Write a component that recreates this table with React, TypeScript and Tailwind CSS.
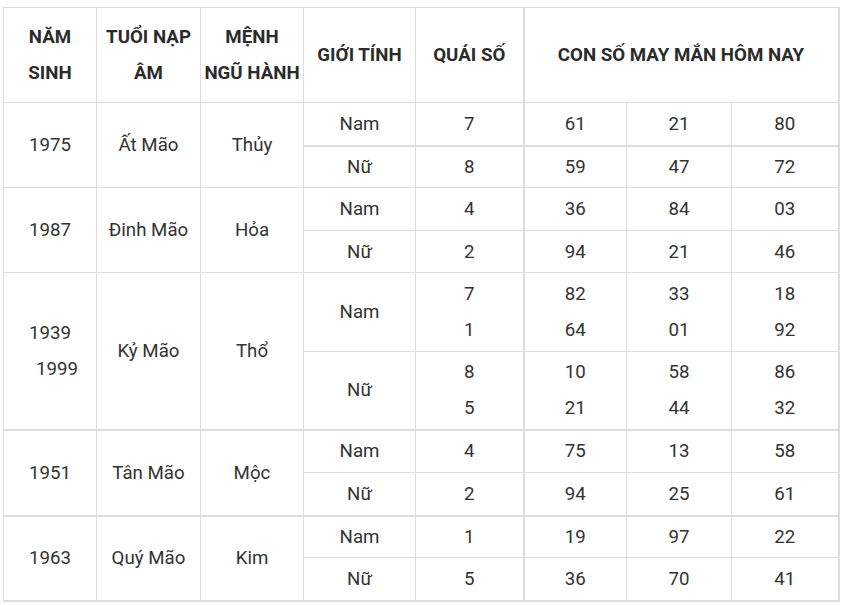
import React from "react";

type Sub = { g: string; q: string; n: [string, string, string]; h: string; thick?: boolean };
type Group = { year: React.ReactNode; tuoi: string; menh: string; rows: Sub[]; thick?: boolean };

const groups: Group[] = [
  {
    year: "1975",
    tuoi: "Ất Mão",
    menh: "Thủy",
    rows: [
      { g: "Nam", q: "7", n: ["61", "21", "80"], h: "h-[43px]", thick: true },
      { g: "Nữ", q: "8", n: ["59", "47", "72"], h: "h-[42px]" },
    ],
  },
  {
    year: "1987",
    tuoi: "Đinh Mão",
    menh: "Hỏa",
    rows: [
      { g: "Nam", q: "4", n: ["36", "84", "03"], h: "h-[43px]" },
      { g: "Nữ", q: "2", n: ["94", "21", "46"], h: "h-[42px]" },
    ],
  },
  {
    year: (
      <>
        1939
        <br />
        <span className="pl-[14px]">1999</span>
      </>
    ),
    tuoi: "Kỷ Mão",
    menh: "Thổ",
    rows: [
      { g: "Nam", q: "7\n1", n: ["82\n64", "33\n01", "18\n92"], h: "h-[79px]" },
      { g: "Nữ", q: "8\n5", n: ["10\n21", "58\n44", "86\n32"], h: "h-[78px]" },
    ],
  },
  {
    year: "1951",
    tuoi: "Tân Mão",
    menh: "Mộc",
    thick: true,
    rows: [
      { g: "Nam", q: "4", n: ["75", "13", "58"], h: "h-[43px]" },
      { g: "Nữ", q: "2", n: ["94", "25", "61"], h: "h-[43px]" },
    ],
  },
  {
    year: "1963",
    tuoi: "Quý Mão",
    menh: "Kim",
    thick: true,
    rows: [
      { g: "Nam", q: "1", n: ["19", "97", "22"], h: "h-[42px]" },
      { g: "Nữ", q: "5", n: ["36", "70", "41"], h: "h-[43px]" },
    ],
  },
];

const cell = "border border-[#dddddd] text-center align-middle p-0 leading-[36px] whitespace-pre-line";

export default function App() {
  return (
    <div className="bg-white w-[844px] h-[605px] pt-[7px] pl-[3px] font-['Roboto',sans-serif] text-[18.7px] text-[#333333]">
      <table className="table-fixed border-collapse w-[835px]">
        <colgroup>
          <col className="w-[93px]" />
          <col className="w-[104px]" />
          <col className="w-[103px]" />
          <col className="w-[112px]" />
          <col className="w-[108px]" />
          <col className="w-[103px]" />
          <col className="w-[105px]" />
          <col className="w-[107px]" />
        </colgroup>
        <thead>
          <tr className="h-[95px] font-bold text-[#2b2b2b]">
            <th className={cell}>NĂM<br />SINH</th>
            <th className={cell}>TUỔI NẠP<br />ÂM</th>
            <th className={cell}>MỆNH<br />NGŨ HÀNH</th>
            <th className={cell}>GIỚI TÍNH</th>
            <th className={cell}>QUÁI SỐ</th>
            <th colSpan={3} className={`${cell} border-l-2 border-r-2`}>CON SỐ MAY MẮN HÔM NAY</th>
          </tr>
        </thead>
        <tbody>
          {groups.map((gr, gi) =>
            gr.rows.map((r, ri) => {
              const top = ri === 0 && gr.thick ? "border-t-2" : "";
              const bottom = r.thick ? "border-b-2" : "";
              const last = gi === groups.length - 1 && ri === gr.rows.length - 1 ? "border-b-2" : "";
              const spanBottom = gi === groups.length - 1 ? "border-b-2" : "";
              return (
                <tr key={`${gi}-${ri}`} className={r.h}>
                  {ri === 0 && (
                    <>
                      <td rowSpan={gr.rows.length} className={`${cell} ${top} ${spanBottom}`}>
                        {gr.year}
                      </td>
                      <td rowSpan={gr.rows.length} className={`${cell} ${top} ${spanBottom}`}>
                        {gr.tuoi}
                      </td>
                      <td rowSpan={gr.rows.length} className={`${cell} ${top} ${spanBottom}`}>
                        {gr.menh}
                      </td>
                    </>
                  )}
                  <td className={`${cell} ${top} ${bottom} ${last}`}>{r.g}</td>
                  <td className={`${cell} ${top} ${bottom} ${last}`}>{r.q}</td>
                  <td className={`${cell} ${top} ${bottom} ${last} border-l-2`}>{r.n[0]}</td>
                  <td className={`${cell} ${top} ${bottom} ${last}`}>{r.n[1]}</td>
                  <td className={`${cell} ${top} ${bottom} ${last} border-r-2`}>{r.n[2]}</td>
                </tr>
              );
            })
          )}
        </tbody>
      </table>
    </div>
  );
}
